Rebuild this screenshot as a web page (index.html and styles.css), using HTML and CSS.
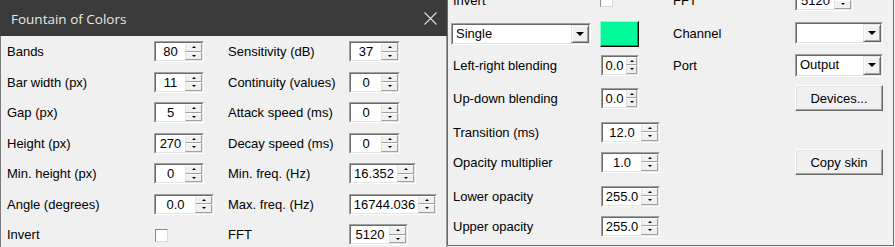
FILE: index.html
```html
<!DOCTYPE html>
<html>
<head>
<meta charset="utf-8">
<link rel="stylesheet" href="styles.css">
</head>
<body>
<div class="screen">
  <section class="win win-left">
    <header class="titlebar">
      <span class="title">Fountain of Colors</span>
      <svg class="close" width="13" height="13" viewBox="0 0 13 13"><path d="M0.5 0.5L12.5 12.5M12.5 0.5L0.5 12.5" stroke="#e0e0e0" stroke-width="1.1" fill="none"/></svg>
    </header>
    <div class="body grid">
      <span class="lbl">Bands</span>
      <div class="spin w50"><div class="in"><span class="val">80</span><span class="btns"><i class="up"></i><i class="dn"></i></span></div></div>
      <span class="lbl">Sensitivity (dB)</span>
      <div class="spin w51"><div class="in"><span class="val">37</span><span class="btns"><i class="up"></i><i class="dn"></i></span></div></div>

      <span class="lbl">Bar width (px)</span>
      <div class="spin w50"><div class="in"><span class="val">11</span><span class="btns"><i class="up"></i><i class="dn"></i></span></div></div>
      <span class="lbl">Continuity (values)</span>
      <div class="spin w51"><div class="in"><span class="val">0</span><span class="btns"><i class="up"></i><i class="dn"></i></span></div></div>

      <span class="lbl">Gap (px)</span>
      <div class="spin w50"><div class="in"><span class="val">5</span><span class="btns"><i class="up"></i><i class="dn"></i></span></div></div>
      <span class="lbl">Attack speed (ms)</span>
      <div class="spin w51"><div class="in"><span class="val">0</span><span class="btns"><i class="up"></i><i class="dn"></i></span></div></div>

      <span class="lbl">Height (px)</span>
      <div class="spin w50"><div class="in"><span class="val">270</span><span class="btns"><i class="up"></i><i class="dn"></i></span></div></div>
      <span class="lbl">Decay speed (ms)</span>
      <div class="spin w51"><div class="in"><span class="val">0</span><span class="btns"><i class="up"></i><i class="dn"></i></span></div></div>

      <span class="lbl">Min. height (px)</span>
      <div class="spin w50"><div class="in"><span class="val">0</span><span class="btns"><i class="up"></i><i class="dn"></i></span></div></div>
      <span class="lbl">Min. freq. (Hz)</span>
      <div class="spin w67"><div class="in"><span class="val">16.352</span><span class="btns"><i class="up"></i><i class="dn"></i></span></div></div>

      <span class="lbl">Angle (degrees)</span>
      <div class="spin w60"><div class="in"><span class="val">0.0</span><span class="btns"><i class="up"></i><i class="dn"></i></span></div></div>
      <span class="lbl">Max. freq. (Hz)</span>
      <div class="spin w88"><div class="in"><span class="val">16744.036</span><span class="btns"><i class="up"></i><i class="dn"></i></span></div></div>

      <span class="lbl">Invert</span>
      <span class="chk chk-left"></span>
      <span class="lbl">FFT</span>
      <div class="spin w59"><div class="in"><span class="val">5120</span><span class="btns"><i class="up"></i><i class="dn"></i></span></div></div>
    </div>
  </section>

  <section class="win win-right">
    <div class="rbody">
      <div class="rrow first">
        <span class="lbl">Invert</span>
        <span class="chk chk-right"></span>
        <span class="lbl">FFT</span>
        <div class="spin w58"><div class="in"><span class="val">5120</span><span class="btns"><i class="up"></i><i class="dn"></i></span></div></div>
      </div>
      <div class="rrow g8">
        <div class="combo single"><div class="in"><span class="ctext">Single</span><span class="dd"></span></div></div>
        <span class="swatch"></span>
        <span class="lbl up1">Channel</span>
        <div class="combo side up1"><div class="in"><span class="ctext"></span><span class="dd"></span></div></div>
      </div>
      <div class="rrow g5">
        <span class="lbl">Left-right blending</span>
        <div class="spin w38 narrow"><div class="in"><span class="val">0.0</span><span class="btns"><i class="up"></i><i class="dn"></i></span></div></div>
        <span class="lbl">Port</span>
        <div class="combo side port"><div class="in"><span class="ctext">Output</span><span class="dd"></span></div></div>
      </div>
      <div class="rrow g7">
        <span class="lbl">Up-down blending</span>
        <div class="spin w38 narrow"><div class="in"><span class="val">0.0</span><span class="btns"><i class="up"></i><i class="dn"></i></span></div></div>
        <button class="btn c4">Devices...</button>
      </div>
      <div class="rrow g8">
        <span class="lbl">Transition (ms)</span>
        <div class="spin w59"><div class="in"><span class="val">12.0</span><span class="btns"><i class="up"></i><i class="dn"></i></span></div></div>
      </div>
      <div class="rrow g4">
        <span class="lbl">Opacity multiplier</span>
        <div class="spin w59"><div class="in"><span class="val">1.0</span><span class="btns"><i class="up"></i><i class="dn"></i></span></div></div>
        <button class="btn c4">Copy skin</button>
      </div>
      <div class="rrow g8">
        <span class="lbl">Lower opacity</span>
        <div class="spin w59"><div class="in"><span class="val">255.0</span><span class="btns"><i class="up"></i><i class="dn"></i></span></div></div>
      </div>
      <div class="rrow g4">
        <span class="lbl">Upper opacity</span>
        <div class="spin w59"><div class="in"><span class="val">255.0</span><span class="btns"><i class="up"></i><i class="dn"></i></span></div></div>
      </div>
    </div>
  </section>
</div>
</body>
</html>
```

FILE: styles.css
```css
html, body {
  margin: 0;
  padding: 0;
}
body {
  background: #f0f0f0;
  font-family: "Liberation Sans", Arial, sans-serif;
  font-size: 13px;
  color: #000;
  overflow: hidden;
}
.screen {
  display: flex;
  width: 895px;
  height: 247px;
  overflow: hidden;
}
.win {
  flex: none;
  background: #f0f0f0;
  box-sizing: border-box;
  overflow: hidden;
}
.win-left {
  width: 447px;
  height: 247px;
  display: flex;
  flex-direction: column;
}
.titlebar {
  height: 36px;
  flex: none;
  background: #3b3b3b;
  display: flex;
  align-items: center;
  justify-content: space-between;
  padding: 0 10px 0 11px;
  box-sizing: border-box;
}
.title {
  font-family: "Open Sans", "Noto Sans", sans-serif;
  font-size: 13.5px;
  color: #e8e8e8;
  margin-top: 1px;
}
.close {
  display: block;
}
.body {
  flex: 1;
  border-left: 1px solid #7c7c7c;
  border-right: 1px solid #9a9a9a;
  padding: 5px 0 0 6px;
}
.grid {
  display: grid;
  grid-template-columns: 147px 74px 121px auto;
  grid-auto-rows: 21px;
  row-gap: 9.5px;
  align-items: center;
  justify-items: start;
}
.lbl {
  white-space: nowrap;
  line-height: 15px;
}
.up1 {
  margin-top: -2px;
}

/* spin box */
.spin {
  height: 21px;
  box-sizing: border-box;
  border: 1px solid;
  border-color: #a0a0a0 #ffffff #ffffff #a0a0a0;
  background: #fff;
}
.spin .in,
.combo .in {
  height: 100%;
  box-sizing: border-box;
  border: 1px solid;
  border-color: #696969 #e3e3e3 #e3e3e3 #696969;
  display: flex;
  background: #fff;
}
.val {
  flex: 1;
  text-align: center;
  line-height: 17px;
  white-space: nowrap;
}
.btns {
  width: 17px;
  flex: none;
  display: flex;
  flex-direction: column;
}
.narrow .btns {
  width: 11px;
}
.btns i {
  flex: 1;
  display: flex;
  align-items: center;
  justify-content: center;
  background: #f0f0f0;
  box-sizing: border-box;
  border: 1px solid;
  border-color: #ffffff #a0a0a0 #a0a0a0 #e3e3e3;
}
.btns i::after {
  content: "";
  width: 0;
  height: 0;
  border-left: 2px solid transparent;
  border-right: 2px solid transparent;
}
.btns .up::after {
  border-bottom: 2px solid #000;
}
.btns .dn::after {
  border-top: 2px solid #000;
}
.w50 { width: 50px; }
.w51 { width: 51px; }
.w60 { width: 60px; }
.w67 { width: 67px; }
.w88 { width: 88px; }
.w59 { width: 59px; }
.w58 { width: 58px; }
.w38 { width: 38px; }

/* checkbox */
.chk {
  width: 13px;
  height: 13px;
  box-sizing: border-box;
  border: 1px solid;
  border-color: #8a8a8a #dcdcdc #dcdcdc #8a8a8a;
  background: #fff;
}
.chk-left {
  margin-left: 1px;
  margin-top: 2px;
}
.chk-right {
  margin-left: -1px;
}

/* right window */
.win-right {
  width: 447px;
  height: 246px;
  border: 1px solid #6a6a6a;
  border-top: none;
}
.rbody {
  display: flex;
  flex-direction: column;
  padding-left: 5px;
}
.rrow {
  display: grid;
  grid-template-columns: 148px 72px 122px auto;
  height: 26px;
  align-items: center;
  justify-items: start;
  flex: none;
}
.rrow.first { margin-top: -13px; }
.g8 { margin-top: 8px; }
.g7 { margin-top: 7px; }
.g5 { margin-top: 5px; }
.g4 { margin-top: 4px; }
.c4 { grid-column: 4; }

/* combo */
.combo {
  height: 22px;
  box-sizing: border-box;
  border: 1px solid;
  border-color: #a0a0a0 #ffffff #ffffff #a0a0a0;
  background: #fff;
}
.combo.single {
  width: 140px;
  margin-left: -2px;
}
.combo.side {
  width: 88px;
}
.combo.port {
  height: 23px;
}
.ctext {
  flex: 1;
  padding-left: 3px;
  line-height: 18px;
  white-space: nowrap;
}
.dd {
  width: 18px;
  flex: none;
  margin: 0;
  box-sizing: border-box;
  background: #f0f0f0;
  border: 1px solid;
  border-color: #e3e3e3 #696969 #696969 #e3e3e3;
  box-shadow: inset 1px 1px 0 #ffffff, inset -1px -1px 0 #a0a0a0;
  display: flex;
  align-items: center;
  justify-content: center;
}
.dd::after {
  content: "";
  width: 0;
  height: 0;
  border-left: 4px solid transparent;
  border-right: 4px solid transparent;
  border-top: 4px solid #000;
}

/* color swatch */
.swatch {
  width: 39px;
  height: 26px;
  margin-left: -1px;
  box-sizing: border-box;
  background: #00fa9a;
  border: 1px solid;
  border-color: #8affd2 #000000 #000000 #8affd2;
  box-shadow: inset -1px -1px 0 #009a60;
}

/* push buttons */
.btn {
  width: 88px;
  height: 26px;
  box-sizing: border-box;
  padding: 0;
  font-family: "Liberation Sans", Arial, sans-serif;
  font-size: 13px;
  color: #000;
  background: #f0f0f0;
  border: 1px solid;
  border-color: #ffffff #696969 #696969 #ffffff;
  box-shadow: inset -1px -1px 0 #a0a0a0, inset 1px 1px 0 #e3e3e3;
  display: flex;
  align-items: center;
  justify-content: center;
}
```
